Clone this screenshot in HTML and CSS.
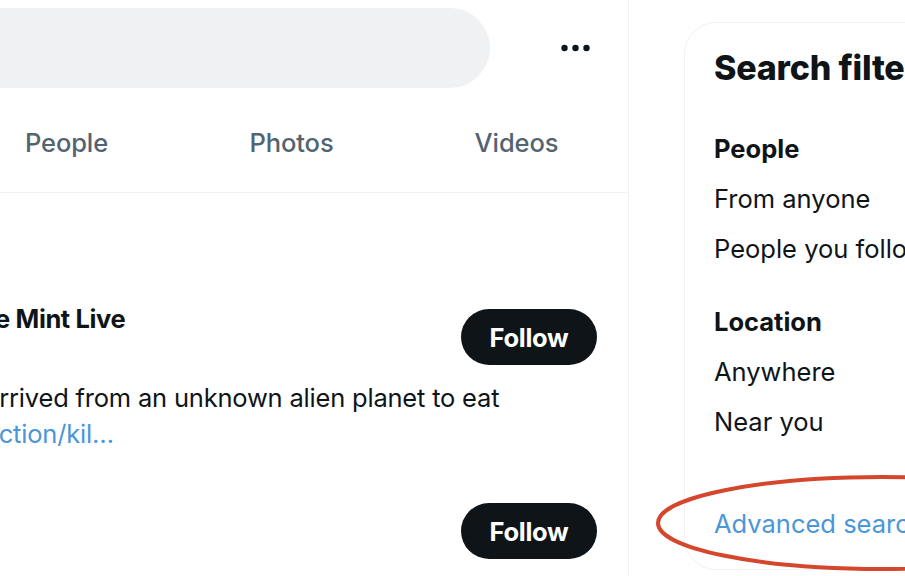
FILE: index.html
```html
<!DOCTYPE html>
<html lang="en">
<head>
<meta charset="utf-8">
<title>Search</title>
<link rel="stylesheet" href="styles.css">
</head>
<body>
<div class="page">
  <main class="main">
    <div class="header">
      <div class="search-pill"></div>
      <div class="more" aria-label="More">
        <svg width="30" height="8" viewBox="0 0 30 8"><circle cx="3.5" cy="4" r="3.2"/><circle cx="14.5" cy="4" r="3.2"/><circle cx="25.5" cy="4" r="3.2"/></svg>
      </div>
    </div>
    <nav class="tabs">
      <div class="tab">People</div>
      <div class="tab">Photos</div>
      <div class="tab">Videos</div>
    </nav>
    <section class="results">
      <div class="user-cell">
        <div class="user-info">
          <div class="user-top">
            <div class="user-names">
              <div class="user-name">The Mint Live</div>
              <div class="user-handle">@TheMintLive</div>
            </div>
            <button class="follow">Follow</button>
          </div>
          <p class="bio">It arrived from an unknown alien planet to eat<br><a class="link">jun​ction/kil…</a></p>
        </div>
      </div>
      <div class="user-cell second">
        <div class="user-info">
          <div class="user-top">
            <div class="user-names">
              <div class="user-name"></div>
              <div class="user-handle"></div>
            </div>
            <button class="follow">Follow</button>
          </div>
        </div>
      </div>
    </section>
  </main>
  <aside class="sidebar">
    <div class="card">
      <h2 class="card-title">Search filters</h2>
      <div class="group">
        <div class="group-title">People</div>
        <div class="option">From anyone</div>
        <div class="option">People you follow</div>
      </div>
      <div class="group">
        <div class="group-title">Location</div>
        <div class="option">Anywhere</div>
        <div class="option">Near you</div>
      </div>
      <a class="advanced">Advanced search</a>
    </div>
    <svg class="annotation" width="300" height="106" viewBox="0 0 300 106"><ellipse cx="232" cy="53" rx="224" ry="46" fill="none" stroke="#d4472c" stroke-width="4"/></svg>
  </aside>
</div>
</body>
</html>
```

FILE: styles.css
```css
* { box-sizing: border-box; }
html, body {
  margin: 0;
  padding: 0;
  background: #ffffff;
}
body {
  width: 905px;
  height: 576px;
  overflow: hidden;
  font-family: Inter, "Noto Sans", sans-serif;
  color: #0f1419;
}
.page {
  display: flex;
  height: 576px;
  position: relative;
}
.main {
  width: 629px;
  flex-shrink: 0;
  border-right: 1px solid #eff3f4;
  overflow: hidden;
  height: 576px;
}
.header {
  height: 96px;
  display: flex;
  align-items: center;
  padding-right: 24px;
}
.search-pill {
  flex: 1;
  margin-left: -200px;
  height: 80px;
  border-radius: 40px;
  background: #eff1f3;
  margin-right: 58px;
}
.more {
  width: 56px;
  height: 56px;
  display: flex;
  align-items: center;
  justify-content: center;
  fill: #0f1419;
}
.tabs {
  display: flex;
  margin-left: -46px;
  height: 97px;
  border-bottom: 1px solid #eff3f4;
}
.tab {
  width: 225px;
  flex-shrink: 0;
  display: flex;
  align-items: center;
  justify-content: center;
  font-size: 25.5px;
  font-weight: 500;
  color: #536471;
  padding-bottom: 3px;
  letter-spacing: -0.1px;
}
.results {
  padding-top: 108px;
}
.user-cell {
  display: flex;
  padding-right: 31px;
}
.user-cell.second {
  margin-top: 43px;
}
.user-info {
  flex: 1;
  margin-left: -37px;
}
.user-top {
  display: flex;
  align-items: center;
  justify-content: space-between;
}
.user-names {
  display: flex;
  flex-direction: column;
}
.user-name {
  font-size: 25.5px;
  font-weight: 700;
  line-height: 36px;
  height: 36px;
  letter-spacing: -0.4px;
}
.user-handle {
  font-size: 25.5px;
  line-height: 36px;
  height: 36px;
  color: transparent;
}
.follow {
  width: 136px;
  height: 56px;
  border: none;
  border-radius: 28px;
  background: #0f1419;
  color: #ffffff;
  font-family: Inter, "Noto Sans", sans-serif;
  font-size: 25.5px;
  font-weight: 700;
  letter-spacing: -0.3px;
  padding: 0;
}
.bio {
  margin: 7px 0 0;
  font-size: 25.5px;
  line-height: 36px;
  white-space: nowrap;
  letter-spacing: -0.2px;
}
.link {
  color: #4b96d9;
}
.sidebar {
  padding-left: 55px;
  flex: 1;
}
.card {
  margin-top: 22px;
  width: 620px;
  border: 1px solid #eff3f4;
  border-radius: 32px;
  padding: 0 0 20px 29px;
}
.card-title {
  margin: 0 0 11px;
  height: 90px;
  line-height: 90px;
  font-size: 34px;
  font-weight: 800;
  white-space: nowrap;
  letter-spacing: -0.2px;
}
.group + .group {
  margin-top: 23px;
}
.group-title {
  height: 50px;
  line-height: 50px;
  font-size: 25.5px;
  font-weight: 700;
}
.option {
  height: 50px;
  line-height: 50px;
  font-size: 25.5px;
  white-space: nowrap;
}
.advanced {
  display: block;
  margin-top: 52px;
  height: 50px;
  line-height: 50px;
  font-size: 25.5px;
  color: #4b96d9;
  white-space: nowrap;
}
.annotation {
  position: absolute;
  left: 650px;
  top: 470px;
}
```
